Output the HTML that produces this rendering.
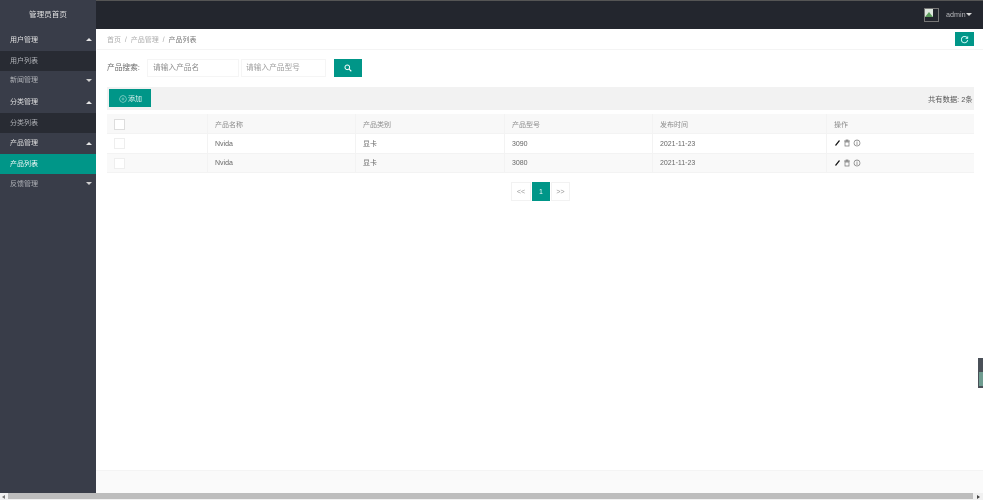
<!DOCTYPE html>
<html><head><meta charset="utf-8"><style>
html,body{margin:0;padding:0;width:983px;height:500px;overflow:hidden;background:#fff}
body{font-family:"Liberation Sans","Noto Sans CJK SC",sans-serif;color:#666}
#w{position:absolute;left:0;top:0;width:983px;height:500px;overflow:hidden;filter:blur(.35px)}
.a{position:absolute;white-space:nowrap}
.t{position:absolute;white-space:nowrap;font-size:7px;line-height:10px;margin-top:1px}
.mi{position:absolute;left:0;width:96px;height:20px;line-height:22px;font-size:7px;color:#d4d5d8;padding-left:10px;box-sizing:border-box}
.sub{background:#282b33;color:#b5b7bc}
.up,.dn{position:absolute;left:86px;width:0;height:0;border-left:3px solid transparent;border-right:3px solid transparent}
.up{border-bottom:3px solid #e6e6e6}
.dn{border-top:3px solid #d0d0d0}
.cb{position:absolute;left:114px;width:9px;height:9px;border:1px solid #e6e6e6;background:#fff}
.hl{position:absolute;background:#f3f3f3}
</style></head><body><div id="w">
<div class="a" style="left:0;top:0;width:983px;height:29px;background:#23262e;border-top:1px solid #555;box-sizing:border-box"></div>
<div class="a" style="left:0;top:0;width:96px;height:493px;background:#393d49"></div>
<div class="t" style="left:29px;top:9px;font-size:7.6px;color:#e6e6e6">管理员首页</div>

<div class="mi" style="top:30px;color:#e8e8e8">用户管理</div><div class="up" style="top:38px"></div>
<div class="mi sub" style="top:51px">用户列表</div>
<div class="mi" style="top:70px;color:#b5b7bc">新闻管理</div><div class="dn" style="top:79px"></div>
<div class="mi" style="top:92px;color:#e8e8e8">分类管理</div><div class="up" style="top:101px"></div>
<div class="mi sub" style="top:113px">分类列表</div>
<div class="mi" style="top:133px;color:#e8e8e8">产品管理</div><div class="up" style="top:142px"></div>
<div class="mi" style="top:154px;background:#009688;color:#fff">产品列表</div>
<div class="mi" style="top:174px;color:#b5b7bc">反馈管理</div><div class="dn" style="top:182px"></div>

<div class="a" style="left:924px;top:8px;width:15px;height:14px;border:1px solid #777;box-sizing:border-box;background:#23262e"></div>
<svg class="a" style="left:925px;top:9px" width="8" height="8"><rect width="8" height="8" fill="#dfe8df"/><path d="M0 8L4 3 8 8z" fill="#5a9a5a"/></svg>
<div class="t" style="left:946px;top:9px;font-size:7.2px;color:#b8b9bd">admin</div>
<div class="a" style="left:966px;top:13px;width:0;height:0;border-left:3px solid transparent;border-right:3px solid transparent;border-top:3px solid #d8d8d8"></div>

<div class="a" style="left:97px;top:49px;width:886px;height:1px;background:#f4f4f4"></div>
<div class="t" style="left:107px;top:35px;color:#aaa">首页&nbsp; /&nbsp; 产品管理&nbsp; /&nbsp; <span style="color:#777">产品列表</span></div>
<div class="a" style="left:955px;top:32px;width:19px;height:14px;background:#009688"></div>
<svg class="a" style="left:960px;top:34.500px" width="9" height="9" viewBox="0 0 9 9"><path d="M7.300 3A3.200 3.200 0 1 0 7.700 5" fill="none" stroke="#dff" stroke-width=".9"/><path d="M7.800 1.200V3.400H5.600" fill="none" stroke="#dff" stroke-width=".7"/></svg>

<div class="t" style="left:107px;top:62px;font-size:7.7px;color:#666">产品搜索:</div>
<div class="a" style="left:147px;top:59px;width:92px;height:18px;border:1px solid #f5f5f5;box-sizing:border-box"></div>
<div class="t" style="left:153px;top:62px;font-size:7.7px;color:#888">请输入产品名</div>
<div class="a" style="left:241px;top:59px;width:85px;height:18px;border:1px solid #f5f5f5;box-sizing:border-box"></div>
<div class="t" style="left:246px;top:62px;font-size:7.7px;color:#999">请输入产品型号</div>
<div class="a" style="left:334px;top:59px;width:28px;height:18px;background:#009688"></div>
<svg class="a" style="left:344px;top:64px" width="8" height="8" viewBox="0 0 8 8"><circle cx="3.300" cy="3.300" r="2.300" fill="none" stroke="#fff" stroke-width="1"/><path d="M5 5L7.300 7.300" stroke="#fff" stroke-width="1.100"/></svg>

<div class="a" style="left:107px;top:87px;width:867px;height:23px;background:#f2f2f2"></div>
<div class="a" style="left:109px;top:89px;width:42px;height:18px;background:#009688"></div>
<svg class="a" style="left:119px;top:95px" width="8" height="8" viewBox="0 0 8 8"><circle cx="4" cy="4" r="3.300" fill="none" stroke="#a8dcd6" stroke-width=".6"/><path d="M2.500 4H5.500M4 2.500V5.500" stroke="#a8dcd6" stroke-width=".6"/></svg>
<div class="t" style="left:128px;top:94px;color:#e6f5f3">添加</div>
<div class="t" style="left:928px;top:94px;font-size:7.300px;color:#555">共有数据: 2条</div>

<div class="a" style="left:107px;top:114px;width:867px;height:59px;background:#fff"></div>
<div class="a" style="left:107px;top:114px;width:867px;height:20px;background:#f8f8f8"></div>
<div class="a" style="left:107px;top:153px;width:867px;height:20px;background:#f9f9f9"></div>
<div class="hl" style="left:107px;top:133px;width:867px;height:1px"></div>
<div class="hl" style="left:107px;top:153px;width:867px;height:1px"></div>
<div class="hl" style="left:107px;top:172px;width:867px;height:1px"></div>
<div class="hl" style="left:207px;top:114px;width:1px;height:59px"></div>
<div class="hl" style="left:355px;top:114px;width:1px;height:59px"></div>
<div class="hl" style="left:504px;top:114px;width:1px;height:59px"></div>
<div class="hl" style="left:652px;top:114px;width:1px;height:59px"></div>
<div class="hl" style="left:826px;top:114px;width:1px;height:59px"></div>
<div class="cb" style="top:119px;border-color:#ddd"></div>
<div class="cb" style="top:138px;border-color:#eee"></div>
<div class="cb" style="top:158px;border-color:#eee"></div>

<div class="t" style="left:215px;top:120px;color:#888">产品名称</div>
<div class="t" style="left:363px;top:120px;color:#888">产品类别</div>
<div class="t" style="left:512px;top:120px;color:#888">产品型号</div>
<div class="t" style="left:660px;top:120px;color:#888">发布时间</div>
<div class="t" style="left:834px;top:120px;color:#888">操作</div>

<div class="t" style="left:215px;top:139px">Nvida</div>
<div class="t" style="left:363px;top:139px">显卡</div>
<div class="t" style="left:512px;top:139px">3090</div>
<div class="t" style="left:660px;top:139px">2021-11-23</div>
<div class="t" style="left:215px;top:158px">Nvida</div>
<div class="t" style="left:363px;top:158px">显卡</div>
<div class="t" style="left:512px;top:158px">3080</div>
<div class="t" style="left:660px;top:158px">2021-11-23</div>

<svg class="a" style="left:834px;top:139px" width="28" height="8" viewBox="0 0 28 8"><path d="M1.500 6.500L5.500 1.500" stroke="#111" stroke-width="1.300"/><path d="M10 2H16M12 2V1H14V2M11 3H15V7H11z" fill="none" stroke="#777" stroke-width=".7"/><circle cx="23" cy="4" r="3" fill="none" stroke="#777" stroke-width=".7"/><path d="M23 3V6M23 1.800V2.500" stroke="#777" stroke-width=".7"/></svg>
<svg class="a" style="left:834px;top:158.500px" width="28" height="8" viewBox="0 0 28 8"><path d="M1.500 6.500L5.500 1.500" stroke="#111" stroke-width="1.300"/><path d="M10 2H16M12 2V1H14V2M11 3H15V7H11z" fill="none" stroke="#777" stroke-width=".7"/><circle cx="23" cy="4" r="3" fill="none" stroke="#777" stroke-width=".7"/><path d="M23 3V6M23 1.800V2.500" stroke="#777" stroke-width=".7"/></svg>

<div class="a" style="left:511px;top:182px;width:20px;height:19px;border:1px solid #f2f2f2;box-sizing:border-box;text-align:center;font-size:7px;line-height:19px;color:#999">&lt;&lt;</div>
<div class="a" style="left:532px;top:182px;width:18px;height:19px;background:#009688;text-align:center;font-size:7px;line-height:21px;color:#fff">1</div>
<div class="a" style="left:551px;top:182px;width:19px;height:19px;border:1px solid #f2f2f2;box-sizing:border-box;text-align:center;font-size:7px;line-height:19px;color:#999">&gt;&gt;</div>

<div class="a" style="left:978px;top:358px;width:5px;height:30px;background:#4a5058"></div>
<div class="a" style="left:979px;top:372px;width:4px;height:14px;background:#6f9c90"></div>

<div class="a" style="left:96px;top:470px;width:887px;height:23px;background:#fafafa;border-top:1px solid #f4f4f4;box-sizing:border-box"></div>
<div class="a" style="left:0;top:493px;width:983px;height:7px;background:#f1f1f1"></div>
<div class="a" style="left:8px;top:493px;width:965px;height:6px;background:#bdbdbd"></div>
<div class="a" style="left:2px;top:495px;width:0;height:0;border-top:2px solid transparent;border-bottom:2px solid transparent;border-right:3px solid #777"></div>
<div class="a" style="left:977px;top:495px;width:0;height:0;border-top:2px solid transparent;border-bottom:2px solid transparent;border-left:3px solid #444"></div>
</div></body></html>
